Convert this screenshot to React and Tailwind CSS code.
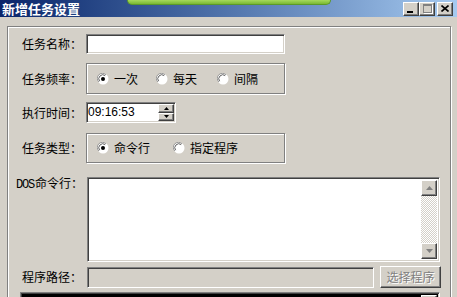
import React from 'react';

const sunken =
  'border border-t-[#808080] border-l-[#808080] border-b-white border-r-white shadow-[inset_1px_1px_0_#404040,inset_-1px_-1px_0_#d4d0c8]';
const raised =
  'border border-t-white border-l-white border-b-[#404040] border-r-[#404040] shadow-[inset_-1px_-1px_0_#808080] bg-[#d4d0c8]';
const etched = 'border border-[#808080] shadow-[inset_1px_1px_0_#fff,1px_1px_0_#fff]';

function Radio({ checked }) {
  return (
    <svg width="12" height="12" viewBox="0 0 12 12" className="shrink-0">
      <circle cx="6" cy="6" r="5.5" fill="#fff" />
      <path d="M1.8 9 A5 5 0 0 1 9 1.8" stroke="#9a9a9a" strokeWidth="1" fill="none" />
      <path d="M2.6 8.2 A4 4 0 0 1 8.2 2.6" stroke="#606060" strokeWidth="1" fill="none" />
      {checked && <circle cx="6" cy="6" r="2" fill="#000" />}
    </svg>
  );
}

function Option({ checked, label, width }) {
  return (
    <div className={`flex items-center gap-[5px] ${width}`}>
      <Radio checked={checked} />
      <span>{label}</span>
    </div>
  );
}

function Arrow({ dir, color = '#000', w = 7, h = 4 }) {
  const d = dir === 'up' ? `M0 ${h} L${w / 2} 0 L${w} ${h} Z` : `M0 0 L${w / 2} ${h} L${w} 0 Z`;
  return (
    <svg width={w} height={h} viewBox={`0 0 ${w} ${h}`}>
      <path d={d} fill={color} />
    </svg>
  );
}

function Scrollbar() {
  return (
    <div className="flex w-[16px] flex-col">
      <div className={`flex h-[16px] items-center justify-center ${raised}`}>
        <Arrow dir="up" color="#808080" />
      </div>
      <div className="flex-1 bg-[image:repeating-conic-gradient(#ffffff_0%_25%,#d4d0c8_0%_50%)] bg-[length:2px_2px]" />
      <div className={`flex h-[16px] items-center justify-center ${raised}`}>
        <Arrow dir="down" color="#808080" />
      </div>
    </div>
  );
}

function TitleButton({ children, className = '' }) {
  return (
    <div className={`relative flex h-[14px] w-[16px] items-center justify-center ${raised} ${className}`}>
      {children}
    </div>
  );
}

export default function App() {
  return (
    <div className="flex h-[297px] w-[457px] flex-col overflow-hidden bg-[#d4d0c8] font-['Noto_Sans_CJK_SC',sans-serif] text-[12px] leading-[14px] text-black">
      {/* title bar */}
      <div className="relative flex h-[17px] shrink-0 items-center bg-gradient-to-r from-[#0a246a] to-[#a6caf0]">
        <span className="ml-[2px] text-[13px] font-bold leading-[15px] text-white">新增任务设置</span>
        <div className="absolute left-[127px] top-0 h-[5px] w-[204px] rounded-b-[5px] border border-t-0 border-[#5c9a28] bg-gradient-to-b from-[#a6da5c] to-[#7ab832]" />
        <div className="ml-auto mr-[4px] flex items-center">
          <TitleButton>
            <div className="mt-[6px] -ml-[2px] h-[2px] w-[6px] bg-black" />
          </TitleButton>
          <TitleButton>
            <div className="h-[9px] w-[9px] border border-t-2 border-[#808080] shadow-[1px_1px_0_#fff]" />
          </TitleButton>
          <TitleButton className="ml-[2px]">
            <svg width="8" height="7" viewBox="0 0 8 7">
              <path d="M0.5 0.5 L7.5 6.5 M7.5 0.5 L0.5 6.5" stroke="#000" strokeWidth="1.6" />
            </svg>
          </TitleButton>
        </div>
      </div>

      {/* body */}
      <div className="flex-1 pl-[7px] pr-[6px] pt-[9px]">
        <div className={`flex h-[300px] flex-col ${etched}`}>
          {/* 任务名称 */}
          <div className="mt-[7px] flex items-center">
            <span className="ml-[14px] w-[64px]">任务名称：</span>
            <div className={`h-[20px] w-[199px] bg-white ${sunken}`} />
          </div>

          {/* 任务频率 */}
          <div className="mt-[9px] flex items-center">
            <span className="ml-[14px] w-[64px]">任务频率：</span>
            <div className={`flex h-[31px] w-[199px] items-center pl-[10px] ${etched}`}>
              <Option checked label="一次" width="w-[59px]" />
              <Option label="每天" width="w-[61px]" />
              <Option label="间隔" />
            </div>
          </div>

          {/* 执行时间 */}
          <div className="mt-[8px] flex items-center">
            <span className="ml-[14px] w-[64px]">执行时间：</span>
            <div className={`flex h-[21px] w-[90px] items-stretch bg-white ${sunken}`}>
              <span className="flex-1 pl-[1px] font-['Liberation_Sans',sans-serif] text-[12px] leading-[19px]">
                09:16:53
              </span>
              <div className="my-[1px] mr-[1px] flex w-[16px] flex-col">
                <div className={`flex flex-1 items-center justify-center ${raised}`}>
                  <Arrow dir="up" w={5} h={3} />
                </div>
                <div className={`flex flex-1 items-center justify-center ${raised}`}>
                  <Arrow dir="down" w={5} h={3} />
                </div>
              </div>
            </div>
          </div>

          {/* 任务类型 */}
          <div className="mt-[10px] flex items-center">
            <span className="ml-[14px] w-[64px]">任务类型：</span>
            <div className={`flex h-[30px] w-[199px] items-center pl-[10px] ${etched}`}>
              <Option checked label="命令行" width="w-[76px]" />
              <Option label="指定程序" />
            </div>
          </div>

          {/* DOS命令行 */}
          <div className="mt-[14px] flex items-start">
            <span className="ml-[8px] w-[71px] whitespace-nowrap leading-[12px]">
              <span className="font-['Liberation_Mono',monospace] text-[12px] tracking-[-1.2px]">DOS</span>
              <span className="ml-[1px]">命令行：</span>
            </span>
            <div className={`flex h-[85px] w-[353px] bg-white p-[2px] ${sunken}`}>
              <div className="flex-1" />
              <Scrollbar />
            </div>
          </div>

          {/* 程序路径 */}
          <div className="mt-[4px] flex items-center">
            <span className="ml-[14px] w-[65px]">程序路径：</span>
            <div className={`h-[21px] w-[287px] bg-[#d4d0c8] ${sunken}`} />
            <div
              className={`ml-[6px] flex h-[22px] w-[61px] items-center justify-center text-[#808080] [text-shadow:1px_1px_0_#fff] ${raised}`}
            >
              选择程序
            </div>
          </div>

          {/* bottom box */}
          <div className={`ml-[12px] mt-[4px] flex h-[30px] w-[420px] bg-black p-[2px] ${sunken}`}>
            <div className="flex-1" />
            <Scrollbar />
          </div>
        </div>
      </div>
    </div>
  );
}
